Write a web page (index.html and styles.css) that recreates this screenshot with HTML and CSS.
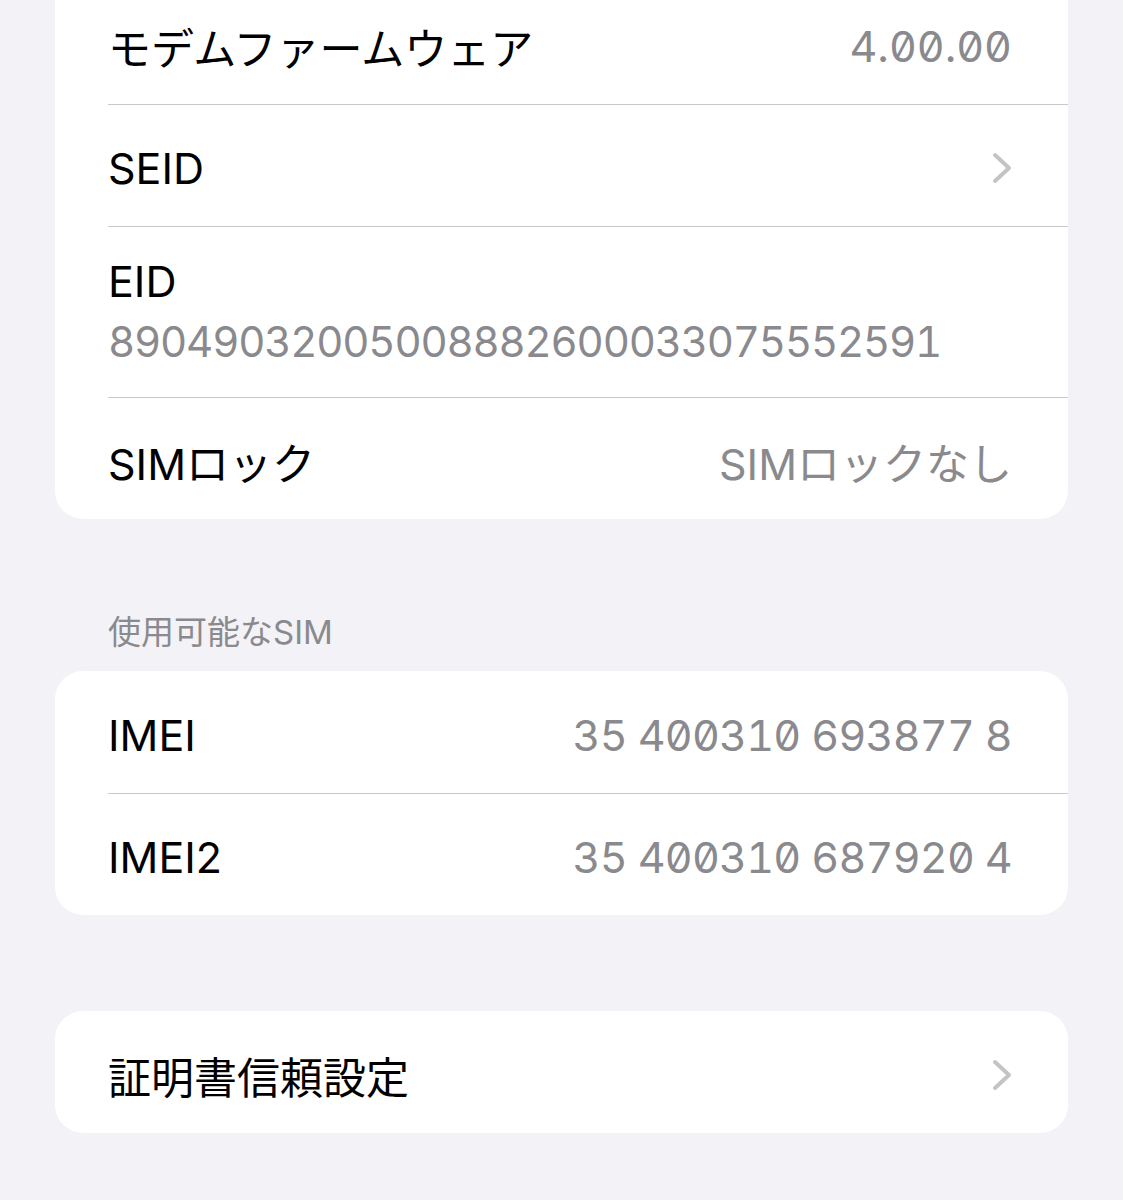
FILE: index.html
```html
<!DOCTYPE html>
<html lang="ja">
  <head>
    <meta charset="UTF-8" />
    <meta name="viewport" content="width=device-width, initial-scale=1.0" />
    <title>情報</title>
    <link rel="stylesheet" href="styles.css">
  </head>
  <body>
    <div class="page">
      <div class="card card-first">
        <div class="row">
          <span class="label">モデムファームウェア</span>
          <span class="value num">4.00.00</span>
        </div>
        <div class="row">
          <span class="label">SEID</span>
          <svg class="chevron" width="20" height="32" viewBox="0 0 20 32">
            <polyline points="3,3 17,16 3,29" />
          </svg>
        </div>
        <div class="row row-stack">
          <span class="label">EID</span>
          <span class="value eid">89049032005008882600033075552591</span>
        </div>
        <div class="row">
          <span class="label">SIMロック</span>
          <span class="value">SIMロックなし</span>
        </div>
      </div>

      <div class="section-header">使用可能なSIM</div>
      <div class="card">
        <div class="row">
          <span class="label">IMEI</span>
          <span class="value num imei">35 400310 693877 8</span>
        </div>
        <div class="row">
          <span class="label">IMEI2</span>
          <span class="value num imei">35 400310 687920 4</span>
        </div>
      </div>

      <div class="card card-spaced">
        <div class="row">
          <span class="label">証明書信頼設定</span>
          <svg class="chevron" width="20" height="32" viewBox="0 0 20 32">
            <polyline points="3,3 17,16 3,29" />
          </svg>
        </div>
      </div>
    </div>
  </body>
</html>
```

FILE: styles.css
```css
html,
body {
  margin: 0;
  padding: 0;
  background-color: #f2f2f7;
}

body {
  font-family: Inter, "Noto Sans CJK JP", sans-serif;
  color: #000;
  font-size: 43px;
}

.page {
  padding: 0 55px;
  height: 1200px;
  overflow: hidden;
}

.card {
  background-color: #fff;
  border-radius: 28px;
}

.card-first {
  margin-top: -18px;
  border-radius: 0 0 28px 28px;
}

.card-spaced {
  margin-top: 96px;
}

/* rows are border-box, so the divider sits inside the 122px */
.row {
  display: flex;
  align-items: center;
  justify-content: space-between;
  box-sizing: border-box;
  height: 122px;
  margin-left: 53px;
  padding: 5px 56px 0 0;
}

.row + .row {
  border-top: 1px solid #c8c7cc;
}

.row-stack {
  flex-direction: column;
  align-items: flex-start;
  justify-content: flex-start;
  height: 171px;
  padding: 24px 0 25px 0;
}

.row-stack .label {
  line-height: 60px;
}

.row-stack .value {
  line-height: 62px;
}

.label {
  white-space: nowrap;
}

.value {
  color: #8a8a8e;
  white-space: nowrap;
}

.num {
  font-feature-settings: "tnum", "zero";
}

.imei {
  letter-spacing: -0.75px;
}

.eid {
  font-size: 42px;
  font-feature-settings: "tnum";
  letter-spacing: -1.2px;
}

.chevron polyline {
  fill: none;
  stroke: #c4c4c7;
  stroke-width: 4;
  stroke-linecap: round;
  stroke-linejoin: round;
}

.section-header {
  color: #8a8a8e;
  font-size: 33px;
  line-height: 40px;
  padding: 93px 53px 19px;
}
```
